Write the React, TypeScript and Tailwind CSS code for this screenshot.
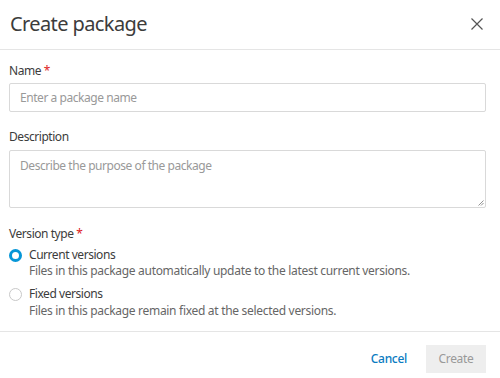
import React from "react";

export default function App() {
  return (
    <div className="w-[500px] h-[378px] bg-white flex flex-col text-[#3c3c3c]" style={{ fontFamily: "'Noto Sans', sans-serif" }}>
      <div className="h-[50px] flex items-center justify-between pl-[10px] pr-[17px] border-b border-[#e5e5e5] shrink-0">
        <div className="text-[20px] leading-none tracking-[-0.6px] text-[#3c3c3c] -mt-[2px]">Create package</div>
        <svg width="12" height="12" viewBox="0 0 12 12" className="-mt-[2px]">
          <path d="M0.5 0.5 L11.5 11.5 M11.5 0.5 L0.5 11.5" stroke="#555" strokeWidth="1.2" fill="none" />
        </svg>
      </div>
      <div className="flex flex-col px-[9px] pt-[14px] pr-[14px] text-[12px] tracking-[-0.45px]">
        <div className="leading-[14px] text-[#3c3c3c]">
          Name <span className="text-[#dd2222]">*</span>
        </div>
        <div className="mt-[5px] h-[29px] border border-[#d9d9d9] rounded-[2px] flex items-center pl-[10px] text-[#999]">
          Enter a package name
        </div>
        <div className="mt-[18px] leading-[14px] text-[#3c3c3c]">Description</div>
        <div className="relative mt-[6px] h-[58px] border border-[#d9d9d9] rounded-[2px] pl-[10px] pt-[6px] text-[#999]">
          Describe the purpose of the package
          <svg width="6" height="6" viewBox="0 0 6 6" className="absolute right-[1px] bottom-[1px]">
            <path d="M0.5 5.5 L5.5 0.5 M3 5.5 L5.5 3" stroke="#777" strokeWidth="0.8" />
          </svg>
        </div>
        <div className="mt-[19px] leading-[14px] text-[#3c3c3c]">
          Version type <span className="text-[#dd2222]">*</span>
        </div>
        <div className="mt-[7px] flex flex-col gap-[9px]">
          <div className="flex gap-[7px]">
            <div className="w-[13px] h-[13px] rounded-full border-[3.5px] border-[#0696d7] mt-[1px] shrink-0" />
            <div className="flex flex-col">
              <div className="leading-[14px] text-[#3c3c3c]">Current versions</div>
              <div className="leading-[14px] mt-[2px] text-[#666] tracking-[-0.3px]">Files in this package automatically update to the latest current versions.</div>
            </div>
          </div>
          <div className="flex gap-[7px]">
            <div className="w-[13px] h-[13px] rounded-full border border-[#c8c8c8] mt-[1px] shrink-0" />
            <div className="flex flex-col">
              <div className="leading-[14px] text-[#3c3c3c]">Fixed versions</div>
              <div className="leading-[14px] mt-[3px] text-[#666] tracking-[-0.3px]">Files in this package remain fixed at the selected versions.</div>
            </div>
          </div>
        </div>
      </div>
      <div className="mt-auto h-[47px] border-t border-[#e5e5e5] flex items-start pt-[13px] justify-end pr-[14px] gap-[19px] shrink-0 text-[12px] tracking-[-0.3px]">
        <div className="h-[28px] flex items-center text-[#0a7bc1] font-medium">Cancel</div>
        <div className="w-[60px] h-[28px] bg-[#eeeeee] flex items-center justify-center text-[#999]">Create</div>
      </div>
    </div>
  );
}
